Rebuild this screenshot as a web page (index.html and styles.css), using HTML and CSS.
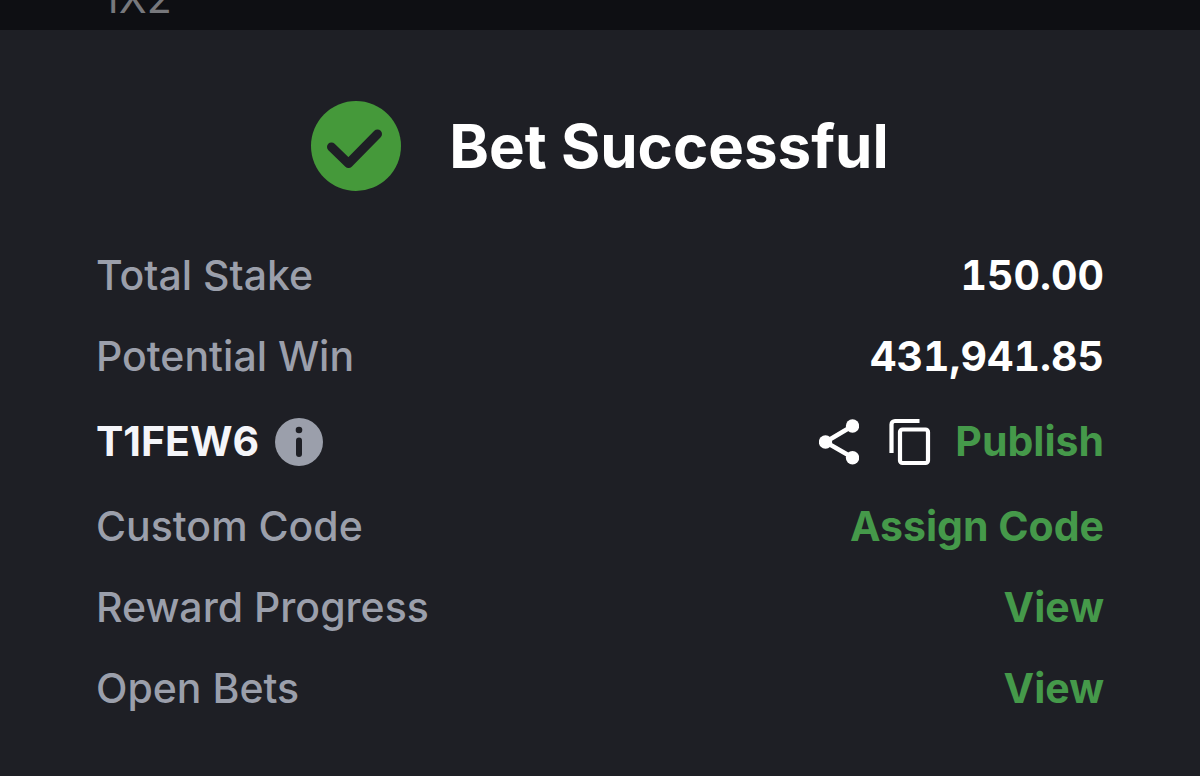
FILE: index.html
```html
<!DOCTYPE html>
<html lang="en">
<head>
<meta charset="utf-8">
<meta name="viewport" content="width=device-width, initial-scale=1">
<title>Bet Successful</title>
<link rel="stylesheet" href="styles.css">
</head>
<body>
<div class="market-bar"><span class="market">1X2</span></div>
<main class="receipt">
  <header class="heading">
    <svg class="check" viewBox="0 0 90 90" aria-hidden="true">
      <circle cx="45" cy="45" r="45" fill="#45993a"/>
      <path d="M20.500 46 37.500 62.500 66.500 33" fill="none" stroke="#1e1f25" stroke-width="9" stroke-linecap="round" stroke-linejoin="round"/>
    </svg>
    <h1 class="title">Bet Successful</h1>
  </header>
  <div class="rows">
    <div class="row"><span class="label">Total Stake</span><span class="value">150.00</span></div>
    <div class="row"><span class="label">Potential Win</span><span class="value">431,941.85</span></div>
    <div class="row row-code">
      <div class="code-group">
        <span class="code">T1FEW6</span>
        <button class="icon-button" type="button" aria-label="Booking code information">
          <svg class="info" viewBox="0 0 48 48" aria-hidden="true">
            <circle cx="24" cy="24" r="24" fill="#9b9fab"/>
            <circle cx="24" cy="12" r="3.300" fill="#1e1f25"/>
            <path d="M24 22.500V36" stroke="#1e1f25" stroke-width="6" stroke-linecap="round"/>
          </svg>
        </button>
      </div>
      <div class="actions">
        <button class="icon-button" type="button" aria-label="Share">
          <svg class="share" viewBox="0 0 40 48" aria-hidden="true">
            <path d="M33.500 8 6.500 24l27 15.500" fill="none" stroke="#fff" stroke-width="4.500"/>
            <circle cx="33.500" cy="8" r="6.700" fill="#fff"/>
            <circle cx="6.500" cy="24" r="6.700" fill="#fff"/>
            <circle cx="33.500" cy="39.700" r="6.700" fill="#fff"/>
          </svg>
        </button>
        <button class="icon-button" type="button" aria-label="Copy code">
          <svg class="copy" viewBox="0 0 42 48" aria-hidden="true" fill="none" stroke="#fff" stroke-width="4.200">
            <path d="M30.500 3H6a3.500 3.500 0 0 0-3.500 3.500v28.500"/>
            <rect x="11" y="11.500" width="28" height="33.500" rx="2.500"/>
          </svg>
        </button>
        <a class="link" href="#publish">Publish</a>
      </div>
    </div>
    <div class="row"><span class="label">Custom Code</span><a class="link" href="#assign">Assign Code</a></div>
    <div class="row"><span class="label">Reward Progress</span><a class="link" href="#rewards">View</a></div>
    <div class="row"><span class="label">Open Bets</span><a class="link" href="#bets">View</a></div>
  </div>
</main>
</body>
</html>
```
FILE: styles.css
```css
* {
  box-sizing: border-box;
}

body {
  margin: 0;
  min-height: 100vh;
  background: #1e1f25;
  color: #fff;
  font-family: Inter, "Liberation Sans", sans-serif;
  font-size: 41px;
}

.market-bar {
  display: flex;
  align-items: flex-end;
  height: 30px;
  padding: 0 102px 8px;
  overflow: hidden;
  background: #0e0f13;
  color: #77787c;
}

.market {
  line-height: 48px;
}

.receipt {
  padding: 71px 96px 60px;
}

.heading {
  display: flex;
  align-items: center;
  justify-content: center;
  gap: 48px;
}

.check {
  width: 90px;
  height: 90px;
}

.title {
  margin: 0;
  font-size: 60px;
  font-weight: 700;
  line-height: 90px;
}

.rows {
  display: flex;
  flex-direction: column;
  gap: 28px;
  margin-top: 58px;
}

.row {
  display: flex;
  align-items: center;
  justify-content: space-between;
  line-height: 53px;
}

.row-code {
  min-height: 61px;
}

.label {
  color: #9b9fab;
  font-weight: 500;
}

.value,
.code,
.link {
  font-weight: 700;
}

.value {
  font-variant-numeric: tabular-nums;
}

.code {
  color: #f4f5f9;
}

.link {
  color: #45994a;
  text-decoration: none;
}

.code-group {
  display: flex;
  align-items: center;
  gap: 16px;
}

.actions {
  display: flex;
  align-items: center;
  gap: 30px;
}

.actions .link {
  margin-left: -6px;
}

.icon-button {
  display: flex;
  padding: 0;
  border: 0;
  background: none;
}

.info {
  width: 48px;
  height: 48px;
}

.share {
  width: 40px;
  height: 48px;
}

.copy {
  width: 42px;
  height: 48px;
}
```
